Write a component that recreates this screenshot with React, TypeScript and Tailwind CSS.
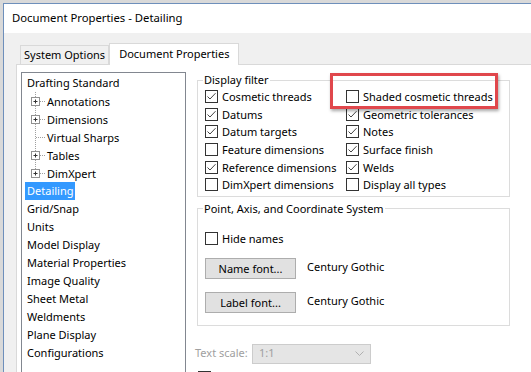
import React from "react";

const font = { fontFamily: '"Noto Sans", sans-serif' };

function Box({ checked }: { checked?: boolean }) {
  return (
    <span className="w-[13px] h-[13px] border border-[#333333] bg-white flex items-center justify-center shrink-0">
      {checked && (
        <svg width="11" height="11" viewBox="0 0 11 11">
          <path d="M1.5 5.5 L4 8 L9.5 2.2" fill="none" stroke="#444" strokeWidth="1" />
        </svg>
      )}
    </span>
  );
}

function Check({ label, checked }: { label: string; checked?: boolean }) {
  return (
    <div className="h-[17.6px] flex items-center gap-[4px] text-[11px] leading-none text-black whitespace-nowrap">
      <Box checked={checked} />
      <span>{label}</span>
    </div>
  );
}

function TreeChild({ label, plus, last }: { label: string; plus?: boolean; last?: boolean }) {
  return (
    <div className="h-[18px] flex items-center">
      <svg width="24" height="18" className="shrink-0">
        <line x1="12.5" y1="0" x2="12.5" y2={last ? 9 : 18} stroke="#a0a0a0" strokeDasharray="1 1" />
        <line x1="13" y1="9.5" x2="23" y2="9.5" stroke="#a0a0a0" strokeDasharray="1 1" />
        {plus && (
          <>
            <rect x="8.5" y="5.5" width="8" height="8" fill="white" stroke="#919191" />
            <line x1="10.5" y1="9.5" x2="14.5" y2="9.5" stroke="#333" />
            <line x1="12.5" y1="7.5" x2="12.5" y2="11.5" stroke="#333" />
          </>
        )}
      </svg>
      <span className="text-[11px] leading-none">{label}</span>
    </div>
  );
}

function TreeTop({ label, selected }: { label: string; selected?: boolean }) {
  return (
    <div className="h-[18px] flex items-center pl-[3px]">
      <span
        className={
          "text-[11px] leading-[18px] px-[2px] " + (selected ? "bg-[#3399ff] text-white" : "text-black")
        }
      >
        {label}
      </span>
    </div>
  );
}

export default function App() {
  return (
    <div className="w-[531px] h-[372px] overflow-hidden bg-[#d9d9d9] pl-[3px] pt-[3px] relative" style={font}>
      <div className="h-full flex flex-col border-l border-t border-[#6e8fbb]">
        <div className="h-[29px] bg-white flex items-center pl-[8px] text-[11.3px] text-black shrink-0">
          Document Properties - Detailing
        </div>
        <div className="flex-1 bg-[#f0f0f0] pt-[10px] pl-[12px] flex flex-col min-h-0">
          <div className="flex items-end h-[22px] pl-[4px] relative z-10 -mb-px">
            <div className="h-[19px] px-[3px] flex items-center border border-b-0 border-[#d9d9d9] bg-[#f0f0f0] text-[11px] text-black mb-px">
              System Options
            </div>
            <div className="h-[22px] px-[9px] flex items-center border border-b-0 border-[#d9d9d9] bg-white text-[11px] text-black">
              Document Properties
            </div>
          </div>
          <div className="flex-1 bg-white border-t border-l border-[#d9d9d9] flex pl-[4px] pt-[7px] min-h-0">
            <div className="w-[165px] shrink-0 border border-[#828790] pt-px h-[340px]">
              <TreeTop label="Drafting Standard" />
              <div className="pl-[1px]">
                <TreeChild label="Annotations" plus />
                <TreeChild label="Dimensions" plus />
                <TreeChild label="Virtual Sharps" />
                <TreeChild label="Tables" plus />
                <TreeChild label="DimXpert" plus last />
              </div>
              <TreeTop label="Detailing" selected />
              <TreeTop label="Grid/Snap" />
              <TreeTop label="Units" />
              <TreeTop label="Model Display" />
              <TreeTop label="Material Properties" />
              <TreeTop label="Image Quality" />
              <TreeTop label="Sheet Metal" />
              <TreeTop label="Weldments" />
              <TreeTop label="Plane Display" />
              <TreeTop label="Configurations" />
            </div>
            <div className="ml-[11px] w-[313px] shrink-0 flex flex-col">
              <fieldset className="border border-[#dcdcdc] pl-[7px] pb-[2px]">
                <legend className="-ml-[2px] px-[1px] text-[11px] leading-[16px] text-black">Display filter</legend>
                <div className="flex">
                  <div className="w-[141px] flex flex-col">
                    <Check label="Cosmetic threads" checked />
                    <Check label="Datums" checked />
                    <Check label="Datum targets" checked />
                    <Check label="Feature dimensions" />
                    <Check label="Reference dimensions" checked />
                    <Check label="DimXpert dimensions" />
                  </div>
                  <div className="flex flex-col">
                    <Check label="Shaded cosmetic threads" />
                    <Check label="Geometric tolerances" checked />
                    <Check label="Notes" checked />
                    <Check label="Surface finish" checked />
                    <Check label="Welds" checked />
                    <Check label="Display all types" />
                  </div>
                </div>
              </fieldset>
              <fieldset className="mt-[4px] border border-[#dcdcdc] pl-[7px] pt-[13px] pb-[12px]">
                <legend className="-ml-[2px] px-[1px] text-[11px] leading-[16px] text-black">
                  Point, Axis, and Coordinate System
                </legend>
                <div className="h-[18px] flex items-center gap-[4px] text-[11px] leading-none">
                  <Box />
                  <span>Hide names</span>
                </div>
                <div className="mt-[10px] flex items-start">
                  <button className="w-[91px] h-[21px] bg-[#e1e1e1] border border-[#adadad] text-[11px] leading-none text-black">
                    Name font...
                  </button>
                  <span className="ml-[11px] mt-[1px] text-[11px] leading-[16px]">Century Gothic</span>
                </div>
                <div className="mt-[13px] flex items-start">
                  <button className="w-[91px] h-[21px] bg-[#e1e1e1] border border-[#adadad] text-[11px] leading-none text-black">
                    Label font...
                  </button>
                  <span className="ml-[11px] mt-[1px] text-[11px] leading-[16px]">Century Gothic</span>
                </div>
              </fieldset>
              <div className="mt-[18px] flex items-center -ml-[2px]">
                <span className="text-[11px] text-[#a0a0a0] w-[57px] whitespace-nowrap">Text scale:</span>
                <div className="w-[119px] h-[20px] bg-[#e5e5e5] border border-[#cccccc] flex items-center justify-between pl-[6px] pr-[6px]">
                  <span className="text-[11px] text-[#a0a0a0]">1:1</span>
                  <svg width="9" height="6" viewBox="0 0 9 6">
                    <path d="M0.5 0.5 L4.5 4.5 L8.5 0.5" fill="none" stroke="#b0b0b0" />
                  </svg>
                </div>
              </div>
              <div className="mt-[7px] ml-[1px]">
                <Box />
              </div>
            </div>
          </div>
        </div>
      </div>
      <div className="absolute left-[330px] top-[73px] w-[168px] h-[36px] border-[3px] border-[#e0474c] shadow-[1px_2px_3px_rgba(0,0,0,0.35)]" />
    </div>
  );
}
